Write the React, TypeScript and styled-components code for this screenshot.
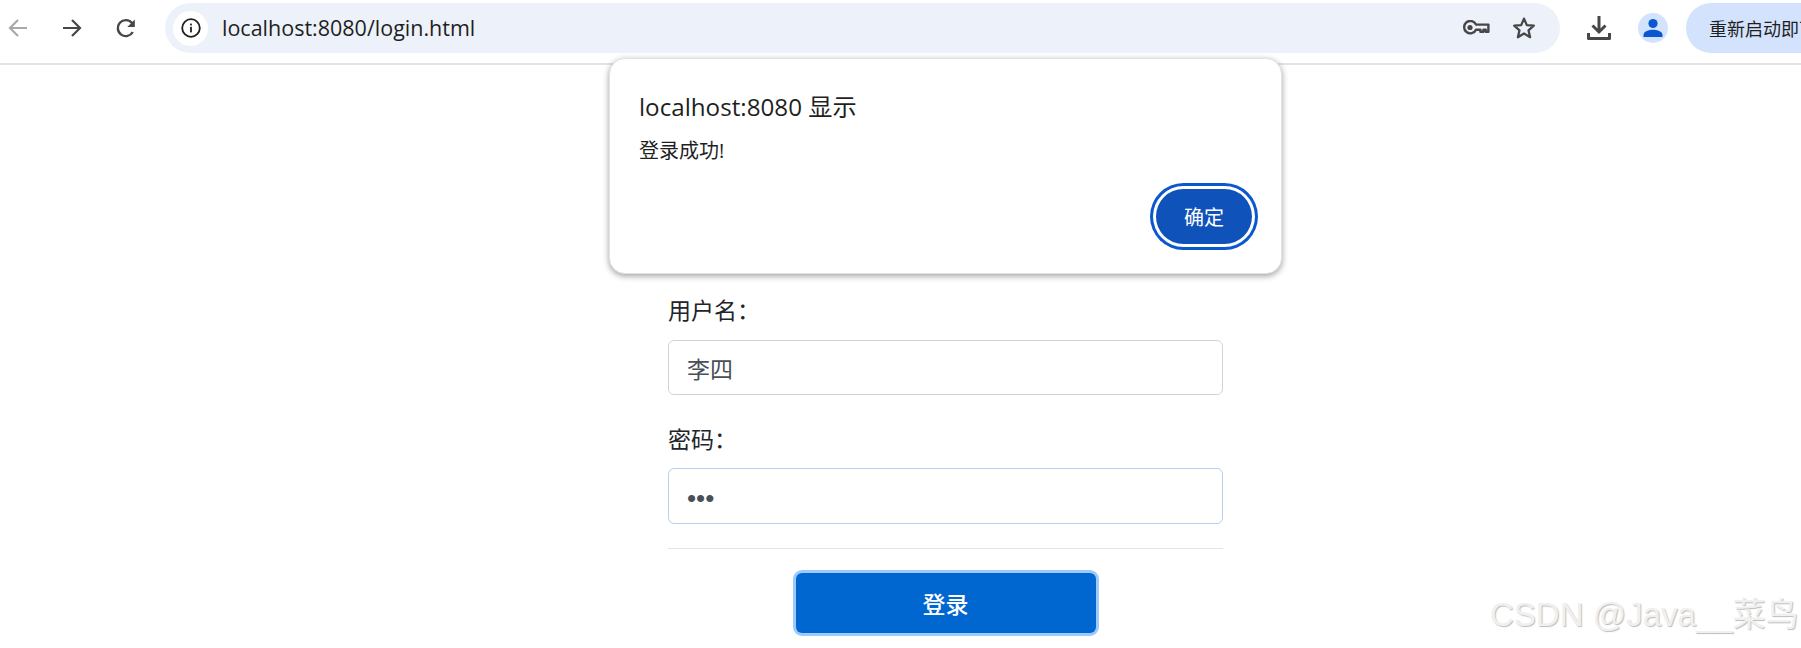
import React from "react";
import styled, { createGlobalStyle } from "styled-components";

const CJK = `"Noto Sans CJK SC", sans-serif`;
const UI = `"Open Sans", "Noto Sans CJK SC", sans-serif`;

const Global = createGlobalStyle`
  html, body { margin: 0; padding: 0; background: #fff; height: 648px; overflow: hidden; }
  #root { height: 648px; position: relative; overflow: hidden; }
`;

const Toolbar = styled.header`
  display: flex;
  align-items: center;
  height: 65px;
  padding: 3px 0 10px;
  box-sizing: border-box;
  border-bottom: 2px solid #e3e3e3;
  background: #fff;
  overflow: hidden;
`;
const NavGroup = styled.nav`
  display: flex;
  gap: 18px;
  flex: none;
`;
const IconButton = styled.span<{ $mx?: number }>`
  width: 36px;
  height: 36px;
  flex: none;
  display: flex;
  align-items: center;
  justify-content: center;
  margin-left: ${(p) => p.$mx ?? 0}px;
`;
const Omnibox = styled.div`
  display: flex;
  align-items: center;
  width: 1395px;
  height: 50px;
  flex: none;
  margin-left: 21px;
  padding: 0 18px 0 8px;
  box-sizing: border-box;
  border-radius: 25px;
  background: #edf2fa;
`;
const InfoChip = styled.span`
  width: 35px;
  height: 35px;
  flex: none;
  border-radius: 50%;
  background: #fff;
  display: flex;
  align-items: center;
  justify-content: center;
`;
const Url = styled.span`
  margin-left: 14px;
  font: 400 21.5px/28px ${UI};
  color: #1f1f1f;
  white-space: nowrap;
`;
const OmniActions = styled.div`
  margin-left: auto;
  display: flex;
  gap: 12px;
`;
const RestartPill = styled.div`
  flex: none;
  margin-left: 15px;
  height: 50px;
  width: 160px;
  padding-left: 23px;
  box-sizing: border-box;
  border-radius: 25px;
  background: #d3e3fd;
  display: flex;
  align-items: center;
  font: 400 18px/24px ${CJK};
  color: #1f1f1f;
  white-space: nowrap;
  overflow: hidden;
`;

const Main = styled.main`
  margin-left: 668px;
  width: 555px;
  padding-top: 231px;
  display: flex;
  flex-direction: column;
`;
const FieldLabel = styled.label`
  font: 400 23px/26px ${CJK};
  color: #212529;
  height: 30px;
`;
const TextInput = styled.input<{ $secret?: boolean }>`
  display: block;
  box-sizing: border-box;
  width: 100%;
  height: ${(p) => (p.$secret ? 56 : 55)}px;
  margin: ${(p) => (p.$secret ? "13px 0 0" : "14px 0 30px")};
  padding: ${(p) => (p.$secret ? "4px 18px 0" : "0 18px")};
  border: 1px solid ${(p) => (p.$secret ? "#b9d0ec" : "#ced4da")};
  border-radius: 6px;
  font: 400 ${(p) => (p.$secret ? 26 : 23)}px/30px ${(p) => (p.$secret ? `"Liberation Sans", sans-serif` : CJK)};
  color: #495057;
  background: #fff;
  outline: none;
`;
const Rule = styled.hr`
  width: 100%;
  margin: 24px 0 0;
  border: 0;
  border-top: 1px solid #e2e4e7;
`;
const SubmitButton = styled.button`
  align-self: center;
  width: 300px;
  height: 60px;
  margin-top: 24px;
  border: 0;
  border-radius: 6px;
  background: #0066d0;
  box-shadow: 0 0 0 3px #9ccbfb;
  color: #fff;
  font: 500 23px/30px ${CJK};
`;

const Dialog = styled.div`
  position: absolute;
  left: 609px;
  top: 58px;
  width: 673px;
  height: 216px;
  box-sizing: border-box;
  padding: 33px 29px 0 29px;
  background: #fff;
  border: 1px solid #e3e3e3;
  border-radius: 16px;
  box-shadow: 0 2px 6px rgba(0, 0, 0, 0.38);
  display: flex;
  flex-direction: column;
`;
const DialogTitle = styled.div`
  font: 400 24.2px/30px ${UI};
  color: #1f1f1f;
`;
const DialogMessage = styled.div`
  margin-top: 17px;
  font: 400 20px/24px ${UI};
  color: #1f1f1f;
`;
const DialogActions = styled.div`
  display: flex;
  justify-content: flex-end;
  margin-top: 26px;
`;
const OkButton = styled.button`
  width: 96px;
  height: 55px;
  border: 0;
  border-radius: 28px;
  background: #0f52ba;
  color: #fff;
  font: 400 20px/24px ${CJK};
  box-shadow: 0 0 0 3px #fff, 0 0 0 6px #0b57d0;
`;

const Watermark = styled.div`
  position: absolute;
  left: 1490px;
  top: 596px;
  font: 400 33px/38px "Liberation Sans", "Noto Sans CJK SC", sans-serif;
  color: #f0f0f0;
  text-shadow: 1px 1px 1px #bdbdbd;
  white-space: nowrap;
`;

const Back = ({ color }: { color: string }) => (
  <svg width="20" height="20" viewBox="0 0 20 20" fill="none" stroke={color} strokeWidth="2.2">
    <path d="M19 10H2M10 2l-8 8 8 8" />
  </svg>
);
const Forward = () => (
  <svg width="20" height="20" viewBox="0 0 20 20" fill="none" stroke="#474747" strokeWidth="2.2">
    <path d="M1 10h17M10 2l8 8-8 8" />
  </svg>
);
const Reload = () => (
  <svg width="20" height="20" viewBox="0 0 20 20" fill="none">
    <path d="M16.8 14a8 8 0 1 1-1-9.2L17 6.5" stroke="#474747" strokeWidth="2.4" />
    <path d="M18.8 1.5v7.5h-7.5z" fill="#474747" />
  </svg>
);
const Info = () => (
  <svg width="20" height="20" viewBox="0 0 20 20" fill="none">
    <circle cx="10" cy="10" r="8.8" stroke="#1f1f1f" strokeWidth="1.8" />
    <rect x="9.1" y="8.8" width="1.8" height="5.6" fill="#1f1f1f" />
    <rect x="9.1" y="5.6" width="1.8" height="1.8" fill="#1f1f1f" />
  </svg>
);
const KeyIcon = () => (
  <svg width="28" height="16" viewBox="0 0 28 16" fill="none" stroke="#474747" strokeWidth="2.4">
    <path d="M14 4.6h12.4v7.2h-2.6V9.7h-2.4v2.1h-3V9.7H14a6.2 6.2 0 1 1 0-5.1z" strokeLinejoin="round" />
    <circle cx="8" cy="7.5" r="2.6" fill="#474747" stroke="none" />
  </svg>
);
const StarIcon = () => (
  <svg width="24" height="24" viewBox="0 0 24 24" fill="none" stroke="#474747" strokeWidth="2.3">
    <path d="M12 2.6l2.8 6.5 7 .6-5.3 4.6 1.6 6.9-6.1-3.7-6.1 3.7 1.6-6.9-5.3-4.6 7-.6z" strokeLinejoin="round" />
  </svg>
);
const DownloadIcon = () => (
  <svg width="26" height="26" viewBox="0 0 26 26" fill="none" stroke="#474747" strokeWidth="3">
    <path d="M13 1v15M6.5 10.5l6.5 6.5 6.5-6.5" />
    <path d="M2.5 18v5.5h21V18" strokeLinejoin="round" />
  </svg>
);
const AvatarIcon = () => (
  <svg width="30" height="30" viewBox="0 0 30 30">
    <circle cx="15" cy="15" r="15" fill="#d3e3fd" />
    <circle cx="15" cy="10.5" r="4.6" fill="#0b57d0" />
    <path d="M5.5 24v-2c0-3.6 5.4-5.2 9.5-5.2s9.5 1.6 9.5 5.2v2z" fill="#0b57d0" />
  </svg>
);

export default function App() {
  return (
    <>
      <Global />
      <Toolbar>
        <NavGroup>
          <IconButton><Back color="#a9a9a9" /></IconButton>
          <IconButton><Forward /></IconButton>
          <IconButton><Reload /></IconButton>
        </NavGroup>
        <Omnibox>
          <InfoChip><Info /></InfoChip>
          <Url>localhost:8080/login.html</Url>
          <OmniActions>
            <IconButton><KeyIcon /></IconButton>
            <IconButton><StarIcon /></IconButton>
          </OmniActions>
        </Omnibox>
        <IconButton $mx={21}><DownloadIcon /></IconButton>
        <IconButton $mx={18}><AvatarIcon /></IconButton>
        <RestartPill>重新启动即可更新</RestartPill>
      </Toolbar>
      <Main>
        <FieldLabel>用户名：</FieldLabel>
        <TextInput type="text" value="李四" readOnly />
        <FieldLabel>密码：</FieldLabel>
        <TextInput type="password" value="123" readOnly $secret />
        <Rule />
        <SubmitButton type="button">登录</SubmitButton>
      </Main>
      <Dialog>
        <DialogTitle>localhost:8080 显示</DialogTitle>
        <DialogMessage>登录成功!</DialogMessage>
        <DialogActions>
          <OkButton type="button">确定</OkButton>
        </DialogActions>
      </Dialog>
      <Watermark>CSDN @Java__菜鸟</Watermark>
    </>
  );
}
